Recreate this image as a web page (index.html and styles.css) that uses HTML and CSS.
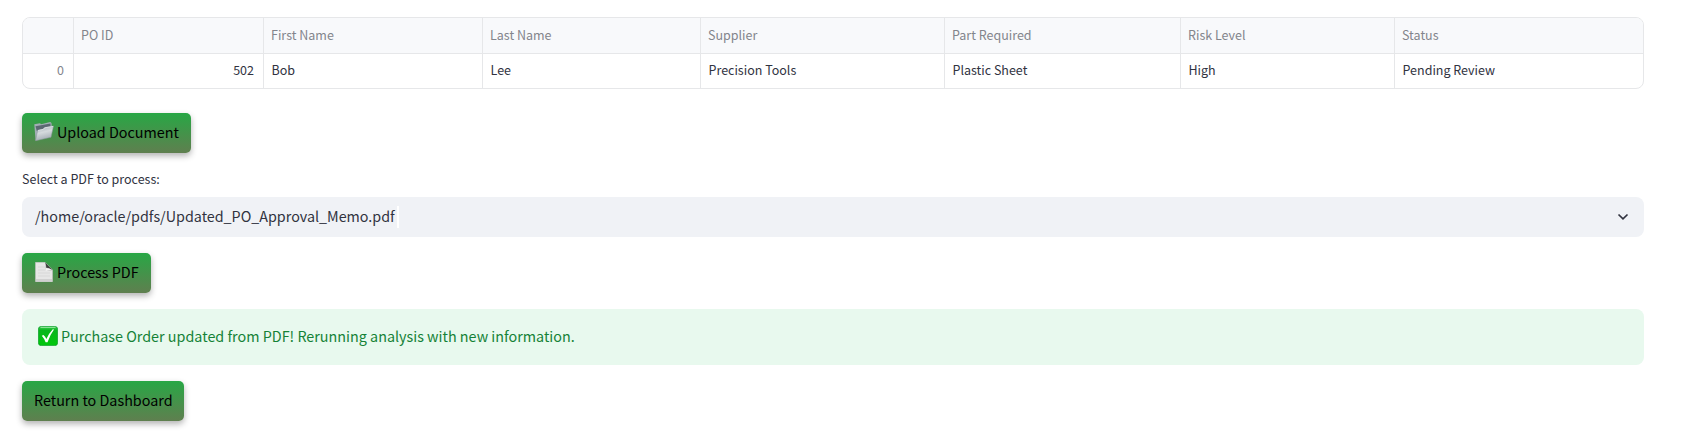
FILE: index.html
```html
<!DOCTYPE html>
<html lang="en">
<head>
<meta charset="utf-8">
<title>Purchase Order</title>
<link rel="stylesheet" href="styles.css">
</head>
<body>
<main class="page">
  <div class="grid">
    <div class="row head"><span></span><span>PO ID</span><span>First Name</span><span>Last Name</span><span>Supplier</span><span>Part Required</span><span>Risk Level</span><span>Status</span></div>
    <div class="row body"><span class="index">0</span><span class="number">502</span><span>Bob</span><span>Lee</span><span>Precision Tools</span><span>Plastic Sheet</span><span>High</span><span>Pending Review</span></div>
  </div>
  <button class="button upload">
    <svg class="icon" width="20" height="20" viewBox="0 0 20 20">
      <defs>
        <linearGradient id="folder" x1="0" y1="0" x2="0.300" y2="1"><stop offset="0" stop-color="#9ba6af"/><stop offset=".5" stop-color="#d5dadd"/><stop offset="1" stop-color="#a5adb5"/></linearGradient>
      </defs>
      <path d="M.3 2.300 6 1.200l1 1L16.200 0l1.300 1 .3 4L3 17.800 1.600 18.500z" fill="#a3adb5"/>
      <path d="M1.500 4.300 16.500 1.600v3L2.800 9z" fill="#5b6872"/>
      <path d="M1.600 18.700 3.700 8.300 9 7.100l1.500-1.600 9-1.500L17 15.300z" fill="url(#folder)" stroke="#8c969e" stroke-width=".5"/>
      <path d="M4 8.500 9.200 7.400l1.500-1.600 8.400-1.400" fill="none" stroke="#eceff0" stroke-width=".7"/>
    </svg><span>Upload Document</span>
  </button>
  <label class="label">Select a PDF to process:</label>
  <div class="select">
    <span class="value">/home/oracle/pdfs/Updated_PO_Approval_Memo.pdf</span><i class="caret"></i>
    <svg class="chevron" width="12" height="8" viewBox="0 0 12 8"><path d="M1.500 1.500 6 5.800l4.500-4.300" fill="none" stroke="#31333f" stroke-width="1.700"/></svg>
  </div>
  <button class="button process">
    <svg class="icon" width="20" height="20" viewBox="0 0 20 20">
      <path d="M1.500.3H11L18.500 8v11.700h-17z" fill="#e6e6e6" stroke="#c3c3c3" stroke-width=".6"/>
      <path d="M2 17h16v2.500H2z" fill="#d0d0d0"/>
      <path d="M4 5h7M4 8h7M4 11h12M4 14h12" stroke="#d4d4d4" stroke-width=".8"/>
      <path d="M11 .3 18.500 8 12 8.600Q13 4.500 11 .3z" fill="#3c3f3c"/>
      <path d="M11 .3Q12.500 3 12 5.500 15 5.800 18.500 8L12 8.800Q11.600 4 11 .3z" fill="#b5b5b5"/>
      <path d="M11.800 6Q15 6.200 18 8l-6 .9z" fill="#f4f4f4"/>
    </svg><span>Process PDF</span>
  </button>
  <div class="alert">
    <svg class="check" width="20" height="20" viewBox="0 0 20 20">
      <defs><linearGradient id="green" x1="0" y1="0" x2="0" y2="1"><stop offset="0" stop-color="#45cf55"/><stop offset=".2" stop-color="#08b51d"/><stop offset="1" stop-color="#00c80b"/></linearGradient></defs>
      <rect x=".4" y=".4" width="19.200" height="19.200" rx="2.800" fill="url(#green)" stroke="#079c26" stroke-width=".7"/>
      <path d="M2.500 1.500h15" stroke="#88e293" stroke-width="1"/>
      <path d="M3.800 9.700 5.500 9q1.800 1.800 2.900 3.900Q11 7.300 14.800 3.300l1.200.3Q12 9 9.500 16.200H7.600Q6.300 12.500 3.800 9.700z" fill="#fff"/>
    </svg><span>Purchase Order updated from PDF! Rerunning analysis with new information.</span>
  </div>
  <button class="button return"><span>Return to Dashboard</span></button>
</main>
</body>
</html>
```
FILE: styles.css
```css
* { box-sizing: border-box; }
body { margin: 0; background: #fff; color: #31333f; font-family: "Noto Sans CJK SC", "Noto Sans", sans-serif; }
.page { width: 1700px; height: 434px; padding: 17px 56px 0 22px; display: flex; flex-direction: column; align-items: flex-start; overflow: hidden; }
.grid { width: 1622px; height: 72px; border: 1px solid #e6e7e9; border-radius: 8px; overflow: hidden; font-size: 12.500px; }
.row { display: grid; grid-template-columns: 51px 190px 219px 218px 244px 236px 214px 1fr; height: 35px; line-height: 32px; white-space: nowrap; }
.row span { padding-left: 7px; border-right: 1px solid #e6e7e9; }
.row span:last-child { border-right: 0; }
.head { height: 36px; line-height: 33px; background: #f8f9fb; color: #83858c; border-bottom: 1px solid #e6e7e9; }
.body span { padding-left: 7.500px; }
.row .index, .row .number { text-align: right; padding-right: 9px; }
.row .index { color: #83858c; }
.button { height: 40px; border: 0; border-radius: 5px; padding: 0 12px 2px; display: flex; align-items: center; gap: 3px; background: linear-gradient(#28a745, #5f7f4f); box-shadow: 0 3px 6px rgba(0, 0, 0, .3); color: #000; font-family: inherit; font-size: 14.350px; line-height: 38px; white-space: nowrap; flex: none; }
.icon { flex: none; }
.upload { width: 169px; margin-top: 24px; }
.process { width: 129px; margin-top: 16px; }
.return { width: 162px; margin-top: 16px; }
.label { font-size: 12.500px; line-height: 20px; margin-top: 16px; height: 20px; }
.select { width: 1622px; height: 40px; margin-top: 8px; padding: 0 15px 0 13px; border-radius: 8px; background: #f0f2f6; display: flex; align-items: center; font-size: 14.320px; }
.value { line-height: 38px; padding-bottom: 2px; }
.caret { width: 2px; height: 22px; margin-left: 2px; background: #fff; }
.chevron { margin-left: auto; }
.alert { width: 1622px; height: 56px; margin-top: 16px; padding: 0 16px; border-radius: 8px; background: #e8f9ee; color: #158237; display: flex; align-items: center; gap: 3px; font-size: 14.350px; }
.alert span { padding-bottom: 4px; }
.check { margin-top: -2px; }
```
